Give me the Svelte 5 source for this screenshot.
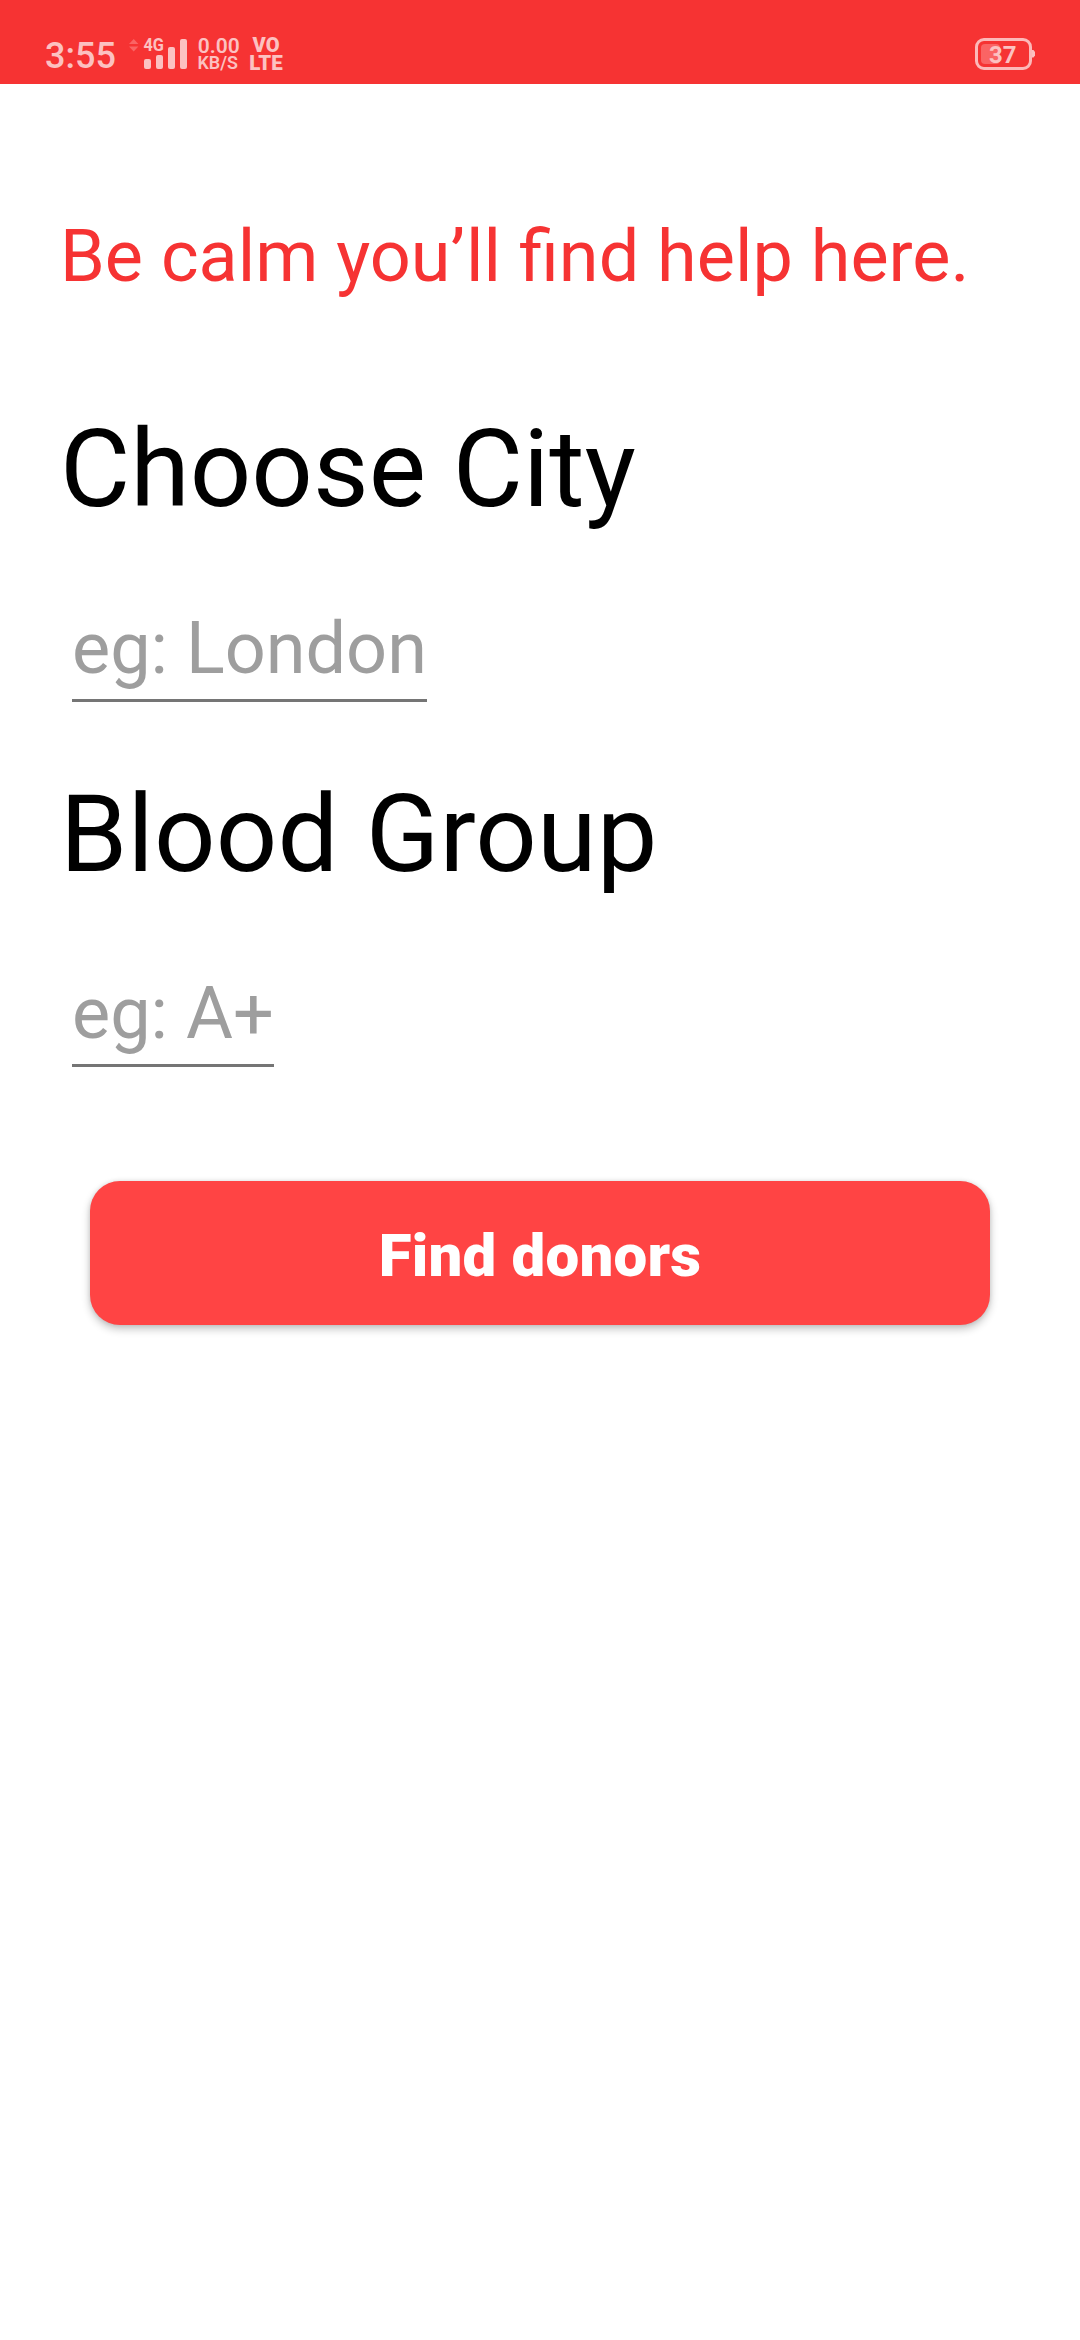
<script>
  const fields = [
    { id: 'city', label: 'Choose City', hint: 'eg: London' },
    { id: 'blood', label: 'Blood Group', hint: 'eg: A+' }
  ];
</script>

<div class="screen">
  <header class="status">
    <span class="clock">3:55</span>
    <svg class="signal" width="60" height="84" viewBox="0 0 60 84">
      <path class="faint" d="M0 44 L4.7 39 L9.4 44Z M0 46.5 L4.7 51.5 L9.4 46.5Z" />
      <text class="net" x="14.5" y="51" textLength="20.5" lengthAdjust="spacingAndGlyphs">4G</text>
      <rect x="15" y="59" width="7" height="10" rx="2" />
      <rect x="27" y="55" width="7" height="14" rx="2" />
      <rect x="39" y="47" width="7" height="22" rx="2" />
      <rect x="51" y="39" width="7" height="30" rx="2" />
    </svg>
    <svg class="speed" width="46" height="84" viewBox="0 0 46 84">
      <text class="rate" x="0.7" y="53" textLength="42" lengthAdjust="spacingAndGlyphs">0.00</text>
      <text class="unit" x="0.5" y="69" textLength="40.5" lengthAdjust="spacingAndGlyphs">KB/S</text>
    </svg>
    <svg class="volte" width="36" height="84" viewBox="0 0 36 84">
      <text x="2.5" y="52.3" textLength="27" lengthAdjust="spacingAndGlyphs">VO</text>
      <text x="-0.8" y="70" textLength="33.5" lengthAdjust="spacingAndGlyphs">LTE</text>
    </svg>
    <svg class="battery" width="60" height="84" viewBox="0 0 60 84">
      <rect class="faint" x="6" y="44" width="19" height="20" rx="4" />
      <rect class="case" x="1.5" y="39.5" width="54" height="29" rx="7.5" />
      <path d="M57 50 H58.5 L60 52 V55.5 L58.5 57.5 H57Z" />
      <text x="14" y="63" textLength="27.5" lengthAdjust="spacingAndGlyphs">37</text>
    </svg>
  </header>

  <main>
    <p class="intro">Be calm you’ll find help here.</p>
    {#each fields as field (field.id)}
      <section class="field {field.id}">
        <h2>{field.label}</h2>
        <div class="entry">{field.hint}</div>
      </section>
    {/each}
    <button type="button">Find donors</button>
  </main>
</div>

<style>
  :global(body) {
    margin: 0;
    background: #fff;
  }

  .screen {
    width: 1080px;
    height: 2340px;
    overflow: hidden;
    background: #fff;
    font-family: Roboto, sans-serif;
  }

  .status {
    display: flex;
    box-sizing: border-box;
    height: 84px;
    padding: 0 45px;
    background: #f63333;
    color: #fcc1c1;
  }

  .status svg {
    flex: none;
    overflow: visible;
    fill: #fcc1c1;
    font-weight: 700;
  }

  .status .faint {
    fill: #fa6464;
  }

  .clock {
    width: 84px;
    padding-top: 35px;
    font-size: 36px;
    font-weight: 500;
    line-height: 42px;
  }

  .signal {
    margin-right: 8px;
  }

  .net {
    font-size: 18px;
  }

  .status .rate {
    font-size: 20px;
    font-weight: 600;
  }

  .status .unit {
    font-size: 17.5px;
    font-weight: 600;
  }

  .speed {
    margin-right: 7px;
  }

  .volte text {
    font-size: 20.5px;
    font-weight: 900;
  }

  .battery {
    margin-left: auto;
    font-size: 24px;
  }

  .battery .case {
    fill: none;
    stroke: #fcb9b9;
    stroke-width: 3;
  }

  main {
    display: flex;
    flex-direction: column;
    padding: 130px 60px 0;
  }

  .intro {
    margin: 0 0 107px;
    color: #f63333;
    font-size: 72px;
    line-height: 85px;
    white-space: nowrap;
  }

  .field {
    display: flex;
    flex-direction: column;
    align-items: flex-start;
    margin-bottom: 69px;
  }

  h2 {
    margin: 0 0 74px;
    color: #000;
    font-size: 108px;
    font-weight: 400;
    line-height: 126px;
  }

  .blood h2 {
    letter-spacing: 0.2px;
  }

  .entry {
    margin-left: 12px;
    padding-bottom: 8px;
    border-bottom: 3px solid #757575;
    color: #9e9e9e;
    font-size: 72px;
    line-height: 85px;
  }

  button {
    height: 144px;
    margin: 45px 30px 0;
    padding: 5px 0 0;
    border: 0;
    border-radius: 30px;
    background: #ff4444;
    box-shadow: 0 4px 8px rgba(0, 0, 0, 0.24), 0 0 4px rgba(0, 0, 0, 0.1);
    color: #fff;
    font: 900 60px/71px Roboto, sans-serif;
    letter-spacing: 0.2px;
  }
</style>
